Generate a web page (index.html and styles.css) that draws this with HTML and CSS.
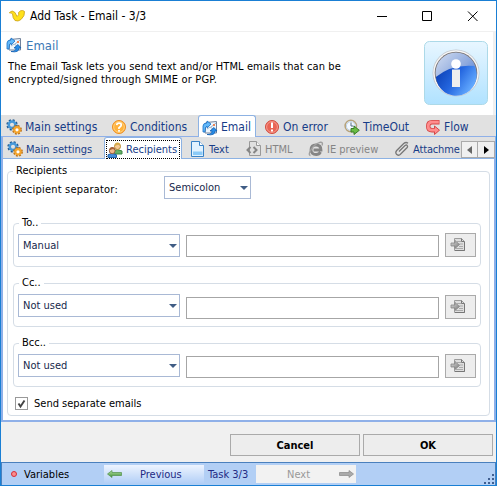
FILE: index.html
```
<!DOCTYPE html>
<html lang="en">
<head>
<meta charset="utf-8">
<title>Add Task - Email - 3/3</title>
<link rel="stylesheet" href="styles.css">
</head>
<body>
<svg class="defs" width="0" height="0" aria-hidden="true">
  <defs>
    <linearGradient id="tile" x1="0" y1="0" x2="0" y2="1"><stop offset="0" stop-color="#e8f6ff"/><stop offset="1" stop-color="#b0e2ff"/></linearGradient>
    <linearGradient id="disc" x1="0" y1="0" x2="1" y2="1"><stop offset="0" stop-color="#d4dff2"/><stop offset=".5" stop-color="#8faadd"/><stop offset="1" stop-color="#2d67d8"/></linearGradient>
    <linearGradient id="wave" x1="0" y1="0" x2="1" y2=".5"><stop offset="0" stop-color="#0739ae"/><stop offset=".55" stop-color="#2466df"/><stop offset="1" stop-color="#63aaff"/></linearGradient>
    <linearGradient id="green" x1="0" y1="0" x2="0" y2="1"><stop offset="0" stop-color="#b8e5a8"/><stop offset="1" stop-color="#3d8c31"/></linearGradient>
    <linearGradient id="grey" x1="0" y1="0" x2="1" y2="1"><stop offset="0" stop-color="#ddd"/><stop offset="1" stop-color="#777"/></linearGradient>
  </defs>
  <symbol id="gears" viewBox="0 0 16 16">
    <circle cx="6" cy="5.8" r="4.7" fill="none" stroke="#245a91" stroke-width="2" stroke-dasharray="2 1.7"/>
    <circle cx="6" cy="5.8" r="3.3" fill="none" stroke="#4698d8" stroke-width="2.5"/>
    <circle cx="11" cy="10.8" r="3.9" fill="none" stroke="#b96c10" stroke-width="2" stroke-dasharray="1.8 1.3"/>
    <circle cx="11" cy="10.8" r="2.7" fill="#fff" stroke="#f3a32b" stroke-width="2.2"/>
  </symbol>
  <symbol id="mail" viewBox="0 0 16 16">
    <path d="M4 2.5 14.500 1.500V13H3z" fill="#eef6fd" stroke="#71829b"/>
    <path d="M5 9 8 7l6 4M9 7l5-4" fill="none" stroke="#9eb3c9"/>
    <rect x="11" y="4" width="2" height="2" fill="#ed8556"/>
    <path d="M1 12V6q0-3 4-3V1l4 3-4 4V6Q3 6 3 12z" fill="#63b9fa" stroke="#1b70c5" stroke-width=".8"/>
    <path d="M5 14.500q5 0 5-3.500H8l4-3.500 3 3.500h-2q0 5-8 3.500z" fill="#278ce7" stroke="#1260b3" stroke-width=".8"/>
  </symbol>
  <symbol id="question" viewBox="0 0 16 16">
    <circle cx="8" cy="8" r="6.5" fill="#ffb23d" stroke="#ef8c20"/><circle cx="8" cy="8" r="5.3" fill="none" stroke="#ffd17c"/>
    <path d="M5.7 6.2q.2-2.1 2.3-2.1 2.3 0 2.3 2Q10.300 7.300 8 8.700V10" fill="none" stroke="#fff" stroke-width="1.700"/><rect x="7.100" y="11" width="1.800" height="1.700" fill="#fff"/>
  </symbol>
  <symbol id="error" viewBox="0 0 16 16">
    <circle cx="8" cy="8" r="6.500" fill="#e96455" stroke="#d34b3e"/><circle cx="8" cy="8" r="5.400" fill="none" stroke="#f49a8e"/>
    <path d="M7 3.500h2V9H7zM7 10.500h2v2H7z" fill="#fff"/>
  </symbol>
  <symbol id="clock" viewBox="0 0 16 16">
    <circle cx="6.800" cy="7" r="5.700" fill="#f4f9ff" stroke="#b7a37b" stroke-width="1.500"/><circle cx="6.800" cy="7" r="4.400" fill="none" stroke="#bed3e8"/>
    <path d="M7 3.500V7h2.500" fill="none" stroke="#536b83"/>
    <path d="M7 9.500h3V7l5.300 4.300L10 15.500V13H7z" fill="#6abd45" stroke="#397d25"/>
  </symbol>
  <symbol id="flow" viewBox="0 0 16 16">
    <path d="M14.500 3.200H7Q3.200 3.200 3.200 7.200T7 11.200h3" fill="none" stroke="#d54747" stroke-width="4.400"/><path d="M9.500 7 14.500 11.200l-5 4.300z" fill="#ff8c8c" stroke="#d54747"/>
    <path d="M13.800 3.200H7Q3.200 3.200 3.200 7.200T7 11.200h4" fill="none" stroke="#ff8c8c" stroke-width="2.800"/>
  </symbol>
  <symbol id="people" viewBox="0 0 16 16">
    <path d="M6 12V9q4-3 9 0v3z" fill="#65b267" stroke="#3f8544"/><circle cx="10.500" cy="4.500" r="3" fill="#f6ca95" stroke="#b88b3b"/><path d="M7.500 4q0-3.500 3-3.500t3 3.500l-2-1.500z" fill="#d5a947"/>
    <path d="M1 15.500v-2.700q4-3 8.500 0v2.700z" fill="#438edb" stroke="#2665ad"/><circle cx="5.200" cy="8.800" r="2.900" fill="#f2b98c" stroke="#9b6040"/><path d="M2.300 8.300Q2.500 5 5.200 5q3 0 3 3.300L6 7z" fill="#a56137"/>
  </symbol>
  <symbol id="page" viewBox="0 0 16 16">
    <path d="M1.500 .5h8l4 4v11h-12z" fill="#e1f2ff" stroke="#3882c7"/><path d="M9.500 .5v4h4" fill="#fff" stroke="#3882c7"/><path d="M3 10.500h9.500V14H3z" fill="#8bcaf7"/>
  </symbol>
  <symbol id="html" viewBox="0 0 16 16">
    <path d="M3.500 .5h7l4 4v10h-11z" fill="#e0e0e0" stroke="#999"/><path d="M10.500 .5v4h4" fill="#f5f5f5" stroke="#999"/>
    <path d="M4.500 6 1.500 9l3 3M7.500 6l3 3-3 3" fill="none" stroke="#858585" stroke-width="2"/>
  </symbol>
  <symbol id="ie" viewBox="0 0 16 16">
    <path d="M12.500 11q-1.300 2.500-4.300 2.500Q3 13.500 3 8.700T8 4q5 0 5 5H5.500" fill="none" stroke="#858585" stroke-width="2.800"/>
    <path d="M2.500 14.500Q0 14 2.500 9.500 6 3 12 1.300q3.500-.5 2 3.200" fill="none" stroke="#a0a0a0" stroke-width="1.400"/>
  </symbol>
  <symbol id="clip" viewBox="0 0 16 16">
    <path d="m5 10.500 6-6q1.500-1 2.200 0t0 2l-7 7Q4 15 2.500 13.300T2.700 9.500l7-7Q12 .7 14 2.200" fill="none" stroke="#777" stroke-width="1.300"/>
  </symbol>
  <symbol id="import" viewBox="0 0 16 16">
    <path d="M4.500 1.500h7l3 3v9h-10z" fill="#dedede" stroke="#9c9c9c"/><path d="M11.500 1.500v3h3M14.500 5v8.500H5" fill="none" stroke="#777"/>
    <path d="M7 4.500h4M9 7h4M9 9.500h4M6 11.500h7" stroke="#aaa"/><path d="M1 6h4V3.500l4.500 4L5 11.500V9H1z" fill="url(#grey)" stroke="#858585" stroke-width=".8"/>
  </symbol>
</svg>
<main class="window">
  <header class="titlebar">
    <svg class="logo" width="16" height="12" viewBox="0 0 16 12"><path d="M.5 2.500Q3-.5 6 2.500L8 6.500q2.500-1.500 1.500-4L11.500.8Q14-.2 15.500 1.500q.5 4.500-3.500 8-3 2.500-6 1Q3.500 8 3.500 3.800 2 2.500.5 3z" fill="#ffe11b" stroke="#c9a01c" stroke-width=".8"/></svg>
    <h1>Add Task - Email - 3/3</h1>
    <svg class="controls" width="104" height="12" viewBox="0 0 104 12"><path d="M0 6.500h10M45.500 1.500h9v9h-9zM91 1.500l9.500 9.500M100.500 1.500 91 11" fill="none" stroke="#000"/></svg>
  </header>
  <section class="intro">
    <div class="intro-copy">
      <h2><svg width="16" height="16"><use href="#mail"/></svg><span>Email</span></h2>
      <p><span>The Email Task lets you send text and/or HTML emails that can be</span><br><span class="desc2">encrypted/signed through SMIME or PGP.</span></p>
    </div>
    <svg class="info" width="64" height="64" viewBox="0 0 64 64">
      <rect x=".5" y=".5" width="63" height="63" rx="5" fill="url(#tile)" stroke="#acd9e8"/>
      <circle cx="32" cy="32" r="23.500" fill="#c3c9d0"/><circle cx="32" cy="32" r="22.700" fill="#f7f7f7"/><circle cx="32" cy="32" r="21.300" fill="#77716f"/>
      <circle cx="32" cy="32" r="20.500" fill="url(#disc)"/><path d="M11.800 36Q28 23 50.500 25A20.500 20.500 0 1 1 11.800 36z" fill="url(#wave)"/>
      <circle cx="32" cy="23" r="4.800" fill="#fff"/><path d="M28 28.500h8V46h-8z" fill="#eee"/>
    </svg>
  </section>
  <nav class="tabs main-tabs">
    <div class="tab t-main"><svg><use href="#gears"/></svg><span>Main settings</span></div>
    <div class="tab t-cond"><svg><use href="#question"/></svg><span>Conditions</span></div>
    <div class="tab t-email active"><svg><use href="#mail"/></svg><span>Email</span></div>
    <div class="tab t-error"><svg><use href="#error"/></svg><span>On error</span></div>
    <div class="tab t-time"><svg><use href="#clock"/></svg><span>TimeOut</span></div>
    <div class="tab t-flow"><svg><use href="#flow"/></svg><span>Flow</span></div>
  </nav>
  <section class="panel">
    <nav class="tabs sub-tabs">
      <div class="tab s-main"><svg><use href="#gears"/></svg><span>Main settings</span></div>
      <div class="tab s-rec active"><div class="focus"><svg><use href="#people"/></svg><span>Recipients</span></div></div>
      <div class="tab s-text"><svg><use href="#page"/></svg><span>Text</span></div>
      <div class="tab s-html disabled"><svg><use href="#html"/></svg><span>HTML</span></div>
      <div class="tab s-ie disabled"><svg><use href="#ie"/></svg><span>IE preview</span></div>
      <div class="tab s-att"><svg><use href="#clip"/></svg><span>Attachme</span></div>
      <div class="scroll"><i class="left"></i></div><div class="scroll last"><i class="right"></i></div>
    </nav>
    <div class="group outer">
      <span class="legend">Recipients</span>
      <div class="separator"><label>Recipient separator:</label><div class="select small"><span>Semicolon</span><i></i></div></div>
      <div class="group to"><span class="legend">To..</span><div class="select"><span>Manual</span><i></i></div><div class="input"></div><div class="pick"><svg><use href="#import"/></svg></div></div>
      <div class="group cc"><span class="legend">Cc..</span><div class="select"><span>Not used</span><i></i></div><div class="input"></div><div class="pick"><svg><use href="#import"/></svg></div></div>
      <div class="group bcc"><span class="legend">Bcc..</span><div class="select"><span>Not used</span><i></i></div><div class="input"></div><div class="pick"><svg><use href="#import"/></svg></div></div>
      <div class="check"><svg class="box" width="13" height="13" viewBox="0 0 13 13"><rect x=".5" y=".5" width="12" height="12" fill="#fff" stroke="#999"/><path d="m3.500 6.500 2 3 4-6" fill="none" stroke="#444" stroke-width="1.900"/></svg><span>Send separate emails</span></div>
    </div>
  </section>
  <div class="actions"><div class="button"><span>Cancel</span></div><div class="button"><span>OK</span></div></div>
  <footer class="status">
    <div class="vars"><svg width="6" height="6" viewBox="0 0 6 6"><circle cx="3" cy="3" r="2.500" fill="#fa8e8e" stroke="#d52d38"/></svg><span>Variables</span></div>
    <div class="step previous"><svg width="15" height="8" viewBox="0 0 15 8"><path d="M.5 4 5 .5v2h9.500v3H5v2z" fill="url(#green)" stroke="#52914a" stroke-width=".7"/></svg><span>Previous</span></div>
    <span class="count">Task 3/3</span>
    <div class="step next"><span>Next</span><svg width="15" height="8" viewBox="0 0 15 8"><path d="M14.500 4 10 .5v2H.5v3H10v2z" fill="#aaa" stroke="#888" stroke-width=".7"/></svg></div>
    <svg class="grip" width="11" height="11" viewBox="0 0 11 11"><path d="M8 0h2v2H8zM4 4h2v2H4zM8 4h2v2H8zM0 8h2v2H0zM4 8h2v2H4zM8 8h2v2H8z" fill="#405f91"/></svg>
  </footer>
</main>
</body>
</html>
```

FILE: styles.css
```
* { box-sizing: border-box; }
body { margin: 0; font: 11px/13px "DejaVu Sans Condensed", "DejaVu Sans", sans-serif; font-stretch: condensed; color: #000; }
.defs { position: absolute; }
h1, h2, p { margin: 0; font-weight: normal; }
svg { display: block; flex: none; }
span, label, h1 { white-space: nowrap; }
.window { width: 497px; height: 486px; border: 1px solid #1a7fd4; background: #fff; display: flex; flex-direction: column; overflow: hidden; }
.titlebar { height: 31px; border-bottom: 1px solid #f0f0f0; display: flex; align-items: center; padding-left: 8px; flex: none; }
.titlebar h1 { font-size: 12px; margin-left: 5px; width: 347px; }
.intro { height: 83px; display: flex; border-right: 3px solid #f0f0f0; padding: 5px 5px 0 5px; flex: none; }
.intro-copy { width: 418px; }
h2 { display: flex; align-items: center; gap: 4px; height: 16px; font-size: 13px; color: #3b78b5; }
.intro p { margin: 7px 0 0 2px; letter-spacing: .1px; }
.desc2 { letter-spacing: .2px; }
.info { margin: 4px 0 0; }
.tabs { display: flex; background: #e1e1e1; color: #173c87; flex: none; }
.tab { display: flex; align-items: center; gap: 3px; flex: none; overflow: hidden; }
.tab svg { width: 16px; height: 16px; }
.main-tabs { height: 21px; padding-left: 1px; font-size: 12px; }
.main-tabs .tab { padding-left: 4px; padding-top: 3px; }
.active { background: #fff; border: 1px solid #8db2e3; border-bottom: 0; border-radius: 3px 3px 0 0; }
.t-main { width: 105px; } .t-cond { width: 91px; } .t-email { width: 58px; }
.t-error { width: 84px; } .t-time { width: 81px; } .t-flow { width: 60px; }
.main-tabs .t-email { padding-left: 3px; padding-top: 2px; margin-bottom: -1px; position: relative; }
.main-tabs .t-error { padding-left: 8px; }
.main-tabs .t-time { padding-left: 4px; }
.panel { height: 286px; border: 2px solid #8fb0e8; border-top-width: 1px; flex: none; }
.sub-tabs { height: 22px; border-bottom: 1px solid #8db2e3; margin-right: -1px; }
.sub-tabs .tab { padding-left: 4px; padding-top: 3px; }
.s-main { width: 101px; }
.sub-tabs .s-rec { width: 78px; padding: 2px 1px 0; height: 22px; }
.focus { display: flex; align-items: center; gap: 3px; width: 74px; height: 19px; border: 1px dotted #000; }
.s-text { width: 60px; } .s-html { width: 64px; } .s-ie { width: 84px; } .s-att { width: 71px; }
.sub-tabs .s-text { padding-left: 8px; }
.sub-tabs .s-html { padding-left: 4px; }
.sub-tabs .s-ie { padding-left: 2px; }
.s-att { letter-spacing: -.15px; }
.disabled { color: #858585; }
.scroll { width: 17px; height: 17px; border: 1px solid #aaa; background: #f0f0f0; margin-top: 4px; display: flex; align-items: center; justify-content: center; flex: none; }
.scroll.last { border-left: 0; }
.left { border: 4px solid transparent; border-right: 5px solid #666; border-left: 0; }
.right { border: 4px solid transparent; border-left: 5px solid #000; border-right: 0; }
.group { position: relative; border: 1px solid #d5dde6; border-radius: 4px; display: flex; }
.legend { position: absolute; top: -8px; left: 5px; background: #fff; padding: 0 3px; }
.outer { margin: 12px 4px 0; height: 245px; flex-direction: column; padding-left: 5px; }
.separator { display: flex; height: 51px; padding-top: 4px; flex: none; }
.separator label { width: 151px; padding-top: 7px; padding-left: 1px; letter-spacing: .2px; }
.select { display: flex; align-items: center; justify-content: space-between; width: 162px; height: 23px; border: 1px solid #a9b9d5; padding: 0 2px 0 4px; color: #17284c; flex: none; }
.select.small { width: 87px; }
.select i { border: 4px solid transparent; border-top: 4px solid #405d85; border-bottom: 0; }
.to, .cc, .bcc { width: 468px; height: 44px; flex: none; margin-bottom: 16px; padding: 10px 0 0 4px; }
.input { width: 253px; height: 22px; border: 1px solid #a6a6a6; margin: 1px 6px 0; flex: none; }
.pick { width: 31px; height: 24px; border: 1px solid #aaa; background: #ededed; padding: 3px 0 0 4px; flex: none; margin-top: -1px; }
.pick svg { width: 16px; height: 16px; }
.cc .input { margin-top: 3px; } .cc .pick { margin-top: 1px; }
.bcc .input { margin-top: 2px; } .bcc .pick { margin-top: 0; }
.bcc { margin-bottom: 10px; }
.check { display: flex; gap: 6px; margin-left: 2px; }
.actions { height: 40px; background: #f0f0f0; padding: 12px 0 0 229px; display: flex; gap: 3px; flex: none; }
.button { width: 130px; height: 22px; border: 1px solid #aaa; background: #ededed; display: flex; align-items: center; justify-content: center; font-weight: bold; }
.status { height: 23px; border: 1px solid #4a80bd; border-bottom: 0; background: #b2cff5; display: flex; align-items: center; flex: none; }
.vars { display: flex; align-items: center; gap: 7px; width: 102px; padding-left: 9px; }
.step { width: 100px; height: 18px; display: flex; align-items: center; }
.previous { background: linear-gradient(#edf4ff, #b4d0f7); color: #222a83; padding-left: 3px; gap: 18px; }
.count { color: #222a83; width: 52px; padding-left: 4px; }
.next { background: #f2f2f2; color: #999; padding-left: 31px; gap: 29px; }
.grip { margin-left: auto; align-self: flex-end; }
```
